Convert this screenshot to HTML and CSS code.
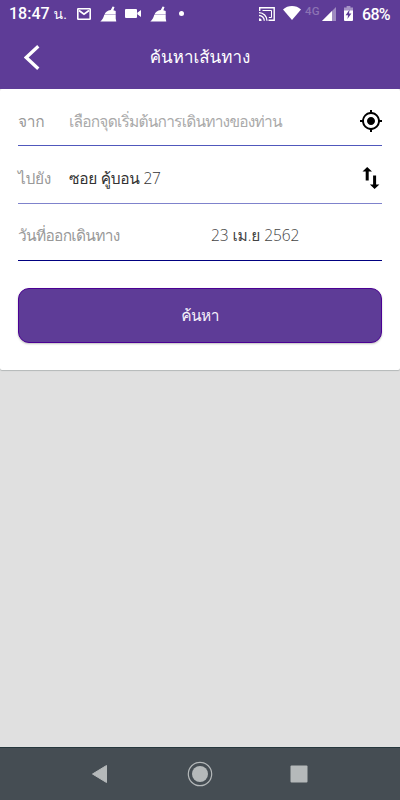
FILE: index.html
```html
<!DOCTYPE html>
<html lang="th">
<head>
    <meta charset="utf-8">
    <meta name="viewport" content="width=device-width, initial-scale=1">
    <title>ค้นหาเส้นทาง</title>
    <link rel="stylesheet" href="styles.css">
</head>

<body>

    <!-- STATUS BAR -->
    <div class="statusbar">
        <span class="clock">18:47 <span class="unit">น.</span></span>
        <svg class="mail" width="14" height="12" viewBox="0 0 14 12">
            <rect x=".8" y=".8" width="12.400" height="10.400" rx=".5" fill="none" stroke="#fff" stroke-width="1.600"/>
            <path d="M2 2.500l5 3.700 5-3.700" fill="none" stroke="#fff" stroke-width="1.800"/>
        </svg>
        <svg class="broom" width="17" height="16" viewBox="0 0 17 16">
            <path d="M10.800 4L12.600.4l1.900.6-1.100 3.200 2.300.8v3.400H4.500C5.500 6 7.500 4.300 10.800 4z"/>
            <path d="M4.300 8.800h11.400v3.700l.6 3H.3C2.200 14 3.400 12 4.300 8.800z"/>
        </svg>
        <svg class="video" width="17" height="10" viewBox="0 0 17 10">
            <rect width="12" height="9" rx="1"/>
            <path d="M12.300 3.800L16 1v7l-3.700-2.800z"/>
        </svg>
        <svg class="broom" width="17" height="16" viewBox="0 0 17 16">
            <path d="M10.800 4L12.600.4l1.900.6-1.100 3.200 2.300.8v3.400H4.500C5.500 6 7.500 4.300 10.800 4z"/>
            <path d="M4.300 8.800h11.400v3.700l.6 3H.3C2.200 14 3.400 12 4.300 8.800z"/>
        </svg>
        <span class="dot"></span>
        <svg class="cast" width="16" height="14" viewBox="0 0 16 14">
            <path d="M.7 4V.8h14.500v12.400H9.500" fill="none" stroke="#fff" stroke-width="1.400"/>
            <path d="M3.500 3.500h9v7H9.800" fill="none" stroke="#fff" stroke-width="1"/>
            <path d="M0 5.700a8 8 0 0 1 8 8M0 8.500a5.300 5.300 0 0 1 5.300 5.300" fill="none" stroke="#fff" stroke-width="1.300"/>
            <path d="M0 11.300A2.600 2.600 0 0 1 2.600 14H0z"/>
        </svg>
        <svg class="wifi" width="18" height="14" viewBox="0 0 18 14">
            <path d="M0 3.500C5-1.100 13-1.100 18 3.500L9 14z"/>
        </svg>
        <span class="network">4G</span>
        <svg class="signal" width="14" height="14" viewBox="0 0 14 14">
            <path d="M0 14L14 0v14z" fill-opacity=".4"/>
            <path d="M0 14L10 4V14z"/>
        </svg>
        <svg class="battery" width="9" height="15" viewBox="0 0 9 15">
            <path d="M2.600 0h3.800v1.500H9V5H0V1.500h2.600z" fill-opacity=".45"/>
            <path d="M0 4.500h9V14a1 1 0 0 1-1 1H1a1 1 0 0 1-1-1z"/>
            <path d="M5.600 3.500L1.600 9.200h2.500L3.400 13l4-5.600H5z" fill="#5e3c97"/>
        </svg>
        <span class="percent">68%</span>
    </div>

    <!-- TITLE BAR -->
    <div class="header">
        <svg class="back" width="16" height="25" viewBox="0 0 16 25">
            <path d="M14.300 1.300L2.200 12.500l12.100 11.200" fill="none" stroke="#fff" stroke-width="3.300"/>
        </svg>
        <h1 class="title">ค้นหาเส้นทาง</h1>
    </div>

    <!-- SEARCH FORM -->
    <div class="card">
        <div class="row">
            <span class="label">จาก</span>
            <span class="value placeholder">เลือกจุดเริ่มต้นการเดินทางของท่าน</span>
            <svg class="icon" width="22" height="22" viewBox="1 1 22 22">
                <path d="M12 8c-2.210 0-4 1.790-4 4s1.790 4 4 4 4-1.790 4-4-1.790-4-4-4zm8.940 3A8.994 8.994 0 0 0 13 3.060V1h-2v2.060A8.994 8.994 0 0 0 3.060 11H1v2h2.060A8.994 8.994 0 0 0 11 20.940V23h2v-2.060A8.994 8.994 0 0 0 20.940 13H23v-2h-2.060zM12 19c-3.870 0-7-3.130-7-7s3.130-7 7-7 7 3.130 7 7-3.130 7-7 7z"/>
            </svg>
        </div>
        <div class="row to-row">
            <span class="label">ไปยัง</span>
            <span class="value">ซอย คู้บอน 27</span>
            <svg class="icon" width="22" height="22" viewBox="0 0 22 22">
                <path d="M7.200 0L12 4.500H8.700V13.500H5.700V4.500H2.500zM13.100 8.500h3v9h3.300L14.600 22l-4.700-4.500h3.200z"/>
            </svg>
        </div>
        <div class="row date-row">
            <span class="label">วันที่ออกเดินทาง</span>
            <span class="date">23 เม.ย 2562</span>
        </div>
        <button class="search">ค้นหา</button>
    </div>

    <!-- NAVIGATION BAR -->
    <div class="navbar">
        <svg width="18" height="20" viewBox="0 0 18 20">
            <path d="M1.500 10L15.500 1.500v17z" stroke="#b5b9ba" stroke-width="1" stroke-linejoin="round"/>
        </svg>
        <svg width="26" height="26" viewBox="0 0 26 26">
            <circle cx="13" cy="13" r="11.700" fill="none" stroke="#b5b9ba" stroke-width="1.200"/>
            <circle cx="13" cy="13" r="8"/>
        </svg>
        <svg width="18" height="18" viewBox="0 0 18 18">
            <rect x=".5" y=".5" width="17" height="17" rx="1"/>
        </svg>
    </div>

</body>

</html>
```

FILE: styles.css
```css
* {
    box-sizing: border-box;
}

body {
    margin: 0;
    height: 800px;
    display: flex;
    flex-direction: column;
    background-color: #e0e0e0;
    font-family: "Open Sans", Loma, sans-serif;
    font-size: 15.500px;
    font-weight: 300;
}

svg {
    display: block;
    flex: none;
}

.statusbar {
    height: 28px;
    display: flex;
    align-items: center;
    padding: 0 9px;
    background-color: #5e3c97;
    color: #fff;
    fill: #fff;
    font-family: Roboto, Loma, sans-serif;
    font-weight: 400;
    white-space: nowrap;
}

.clock {
    width: 68px;
    font-size: 16px;
    font-weight: 500;
    line-height: 28px;
}

.unit {
    font-size: 14px;
    font-weight: 400;
}

.mail {
    margin-top: -1px;
}

.broom {
    margin-left: 9px;
    margin-top: -1px;
}

.video {
    margin-left: 8px;
    margin-top: -1px;
}

.video + .broom {
    margin-left: 8px;
}

.dot {
    width: 5px;
    height: 5px;
    margin-left: 12px;
    margin-top: -1px;
    border-radius: 50%;
    background-color: #fff;
}

.cast {
    margin-left: auto;
}

.wifi {
    margin-left: 8px;
    margin-top: -2px;
}

.network {
    width: 17px;
    margin-left: 4px;
    margin-top: -7px;
    color: #8c73b4;
    font-size: 11.500px;
    font-weight: 500;
    letter-spacing: 0.300px;
}

.battery {
    margin-left: 8px;
    margin-top: -1px;
}

.percent {
    width: 29px;
    margin-left: 9px;
    font-size: 16px;
    font-weight: 500;
    letter-spacing: -0.700px;
}

.header {
    height: 61px;
    display: grid;
    grid-template-columns: 60px 1fr 60px;
    align-items: center;
    padding-bottom: 2px;
    background-color: #5e3c97;
    color: #fff;
}

.back {
    margin-left: 24px;
}

.title {
    margin: 0;
    font-size: 17px;
    font-weight: 400;
    line-height: 24px;
    padding-bottom: 2px;
    text-align: center;
}

.card {
    height: 281px;
    padding: 0 18px;
    background-color: #fff;
    border-radius: 2px;
    box-shadow: 0 1px 1px #b4b8b8;
}

.row {
    height: 57px;
    display: flex;
    align-items: center;
    padding-top: 8px;
    border-bottom: 1px solid #5058bc;
    white-space: nowrap;
}

.label {
    width: 51px;
    color: #999;
    letter-spacing: -0.300px;
}

.value {
    flex: 1;
    color: #333;
    letter-spacing: -0.300px;
}

.placeholder {
    color: #aaa;
    letter-spacing: -0.780px;
}

.to-row {
    height: 58px;
    padding-top: 7px;
    border-bottom-color: #7f83cc;
}

.date-row {
    padding-top: 7px;
    border-bottom-color: #000080;
}

.date-row .label {
    width: 193px;
    letter-spacing: -0.700px;
}

.date {
    color: #444;
    letter-spacing: -0.100px;
}

.search {
    display: block;
    width: 100%;
    height: 55px;
    margin-top: 27px;
    padding: 0 0 1px;
    border: 1px solid #4b0094;
    border-radius: 11px;
    background-color: #5e3c97;
    box-shadow: 0 1px 2px rgba(0, 0, 0, 0.25);
    color: #f4f0fa;
    font: inherit;
    letter-spacing: -0.600px;
}

.navbar {
    height: 53px;
    display: flex;
    align-items: center;
    justify-content: space-between;
    margin-top: auto;
    padding: 0 92px 1px 91px;
    background-color: #454d53;
    border-top: 1px solid #26373d;
    fill: #b5b9ba;
}
```
